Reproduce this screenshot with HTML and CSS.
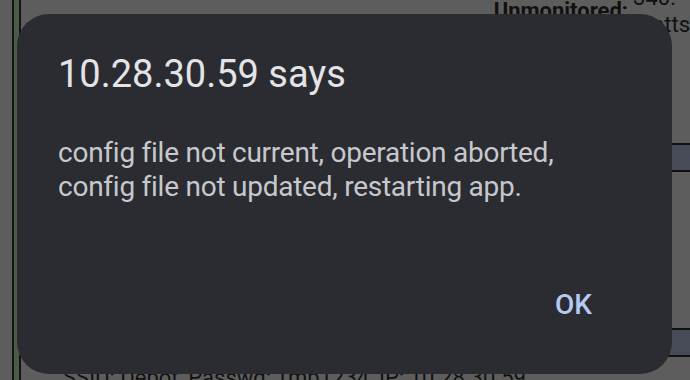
FILE: index.html
```html
<!DOCTYPE html>
<html lang="en">
<head>
    <meta charset="UTF-8">
    <meta name="viewport" content="width=device-width, initial-scale=1.0">
    <title>10.28.30.59</title>
    <link rel="stylesheet" href="styles.css">
</head>
<body>
    <div class="page">
        <div class="frame">
            <div class="frame-inner">
                <div class="stat-row">
                    <span class="stat-text">Live min/day: 30.0 Watts</span>
                    <span class="stat-label">Unmonitored:</span>
                    <span class="stat-value">340.<br>Watts</span>
                </div>
                <div class="bar bar-one"></div>
                <div class="bar bar-two"></div>
                <div class="footer-row">SSID: Depot, Passwd: Tmp1234, IP: 10.28.30.59</div>
            </div>
        </div>
    </div>

    <div class="dialog">
        <h1 class="dialog-title">10.28.30.59 says</h1>
        <p class="dialog-message">config file not current, operation aborted,<br>config file not updated, restarting app.</p>
        <div class="dialog-actions">
            <button class="btn-ok">OK</button>
        </div>
    </div>
</body>
</html>
```

FILE: styles.css
```css
* {
    box-sizing: border-box;
    margin: 0;
    padding: 0;
}

body {
    width: 690px;
    height: 380px;
    overflow: hidden;
    background: #5c5d5c;
    font-family: Roboto, "Liberation Sans", sans-serif;
    position: relative;
}

.page {
    height: 100%;
    padding-left: 12px;
}

.frame {
    height: 100%;
    border-left: 2px solid #141414;
}

.frame-inner {
    height: 100%;
    border-left: 5px solid #4c5b49;
    box-shadow: inset 2px 0 0 #141414;
    display: flex;
    flex-direction: column;
}

.frame-inner > * {
    flex-shrink: 0;
}

.stat-row {
    display: flex;
    align-items: flex-start;
    margin-top: -5px;
    height: 148px;
    color: #111;
    font-size: 22px;
}

.stat-text {
    margin-left: 106px;
    margin-top: 18px;
    width: 370px;
}

.stat-label {
    font-weight: 700;
    width: 140px;
    margin-top: 3px;
}

.stat-value {
    line-height: 27px;
    margin-top: -11px;
}

.bar {
    height: 29px;
    background: #474b57;
    border-top: 2px solid #111;
    border-bottom: 2px solid #111;
}

.bar-two {
    margin-top: 156px;
}

.footer-row {
    margin-top: 8px;
    margin-left: 44px;
    font-size: 22px;
    color: #111;
}

.dialog {
    position: absolute;
    left: 17px;
    top: 14px;
    width: 655px;
    height: 360px;
    border-radius: 32px;
    background: #2b2c31;
    padding: 37px 0 52px 41px;
    display: flex;
    flex-direction: column;
}

.dialog-title {
    font-size: 38px;
    line-height: 46px;
    font-weight: 400;
    color: #e4e4e8;
}

.dialog-message {
    margin-top: 39px;
    font-size: 28px;
    line-height: 34px;
    letter-spacing: -0.25px;
    color: #c7c8cd;
}

.dialog-actions {
    margin-top: auto;
    display: flex;
    justify-content: flex-end;
    padding-right: 68px;
}

.btn-ok {
    background: none;
    border: none;
    font-family: inherit;
    font-size: 28px;
    line-height: 34px;
    font-weight: 500;
    color: #b6c9f2;
    padding: 0 12px;
    cursor: pointer;
}
```
